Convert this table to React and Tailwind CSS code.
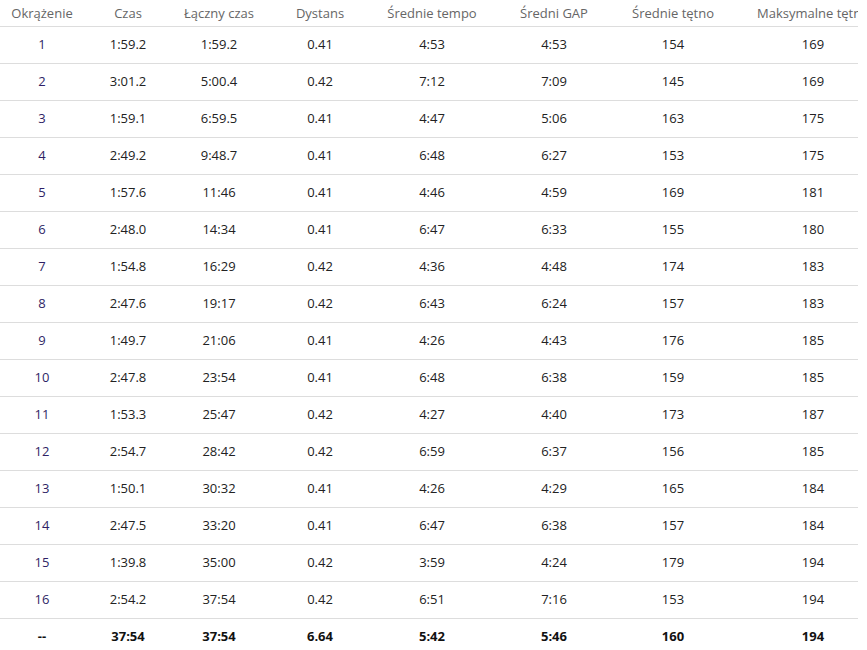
import React from 'react';

const laps = [
    ['1', '1:59.2', '1:59.2', '0.41', '4:53', '4:53', '154', '169'],
    ['2', '3:01.2', '5:00.4', '0.42', '7:12', '7:09', '145', '169'],
    ['3', '1:59.1', '6:59.5', '0.41', '4:47', '5:06', '163', '175'],
    ['4', '2:49.2', '9:48.7', '0.41', '6:48', '6:27', '153', '175'],
    ['5', '1:57.6', '11:46', '0.41', '4:46', '4:59', '169', '181'],
    ['6', '2:48.0', '14:34', '0.41', '6:47', '6:33', '155', '180'],
    ['7', '1:54.8', '16:29', '0.42', '4:36', '4:48', '174', '183'],
    ['8', '2:47.6', '19:17', '0.42', '6:43', '6:24', '157', '183'],
    ['9', '1:49.7', '21:06', '0.41', '4:26', '4:43', '176', '185'],
    ['10', '2:47.8', '23:54', '0.41', '6:48', '6:38', '159', '185'],
    ['11', '1:53.3', '25:47', '0.42', '4:27', '4:40', '173', '187'],
    ['12', '2:54.7', '28:42', '0.42', '6:59', '6:37', '156', '185'],
    ['13', '1:50.1', '30:32', '0.41', '4:26', '4:29', '165', '184'],
    ['14', '2:47.5', '33:20', '0.41', '6:47', '6:38', '157', '184'],
    ['15', '1:39.8', '35:00', '0.42', '3:59', '4:24', '179', '194'],
    ['16', '2:54.2', '37:54', '0.42', '6:51', '7:16', '153', '194'],
];

const total = ['--', '37:54', '37:54', '6.64', '5:42', '5:46', '160', '194'];

const headers = ['Okrążenie', 'Czas', 'Łączny czas', 'Dystans', 'Średnie tempo', 'Średni GAP', 'Średnie tętno', 'Maksymalne tętno'];

const widths = ['w-[84px]', 'w-[88px]', 'w-[94px]', 'w-[108px]', 'w-[116px]', 'w-[128px]', 'w-[110px]', 'w-[170px]'];

const App = () => {
    return (
        <div className="bg-white w-[867px] h-[650px] font-['Open_Sans',sans-serif] text-[13px]">
            <div className="w-[858px] overflow-hidden">
                <table className="w-[898px] table-fixed border-collapse">
                    <thead>
                        <tr className="h-[26px] border-b border-[#dddddd]">
                            {headers.map((h, i) => (
                                <th key={h} className={`${widths[i]} font-normal text-[#666666] text-center whitespace-nowrap pt-[2px]`}>
                                    {h}
                                </th>
                            ))}
                        </tr>
                    </thead>
                    <tbody>
                        {laps.map((row) => (
                            <tr key={row[0]} className="h-[37px] border-b border-[#dddddd]">
                                {row.map((cell, i) => (
                                    <td key={i} className={`text-center ${i === 0 ? 'text-[#2f1f66]' : 'text-[#222222]'}`}>
                                        {cell}
                                    </td>
                                ))}
                            </tr>
                        ))}
                        <tr className="h-[37px]">
                            {total.map((cell, i) => (
                                <td key={i} className="text-center font-bold text-[#111111]">{cell}</td>
                            ))}
                        </tr>
                    </tbody>
                </table>
            </div>
        </div>
    );
};

export default App;
